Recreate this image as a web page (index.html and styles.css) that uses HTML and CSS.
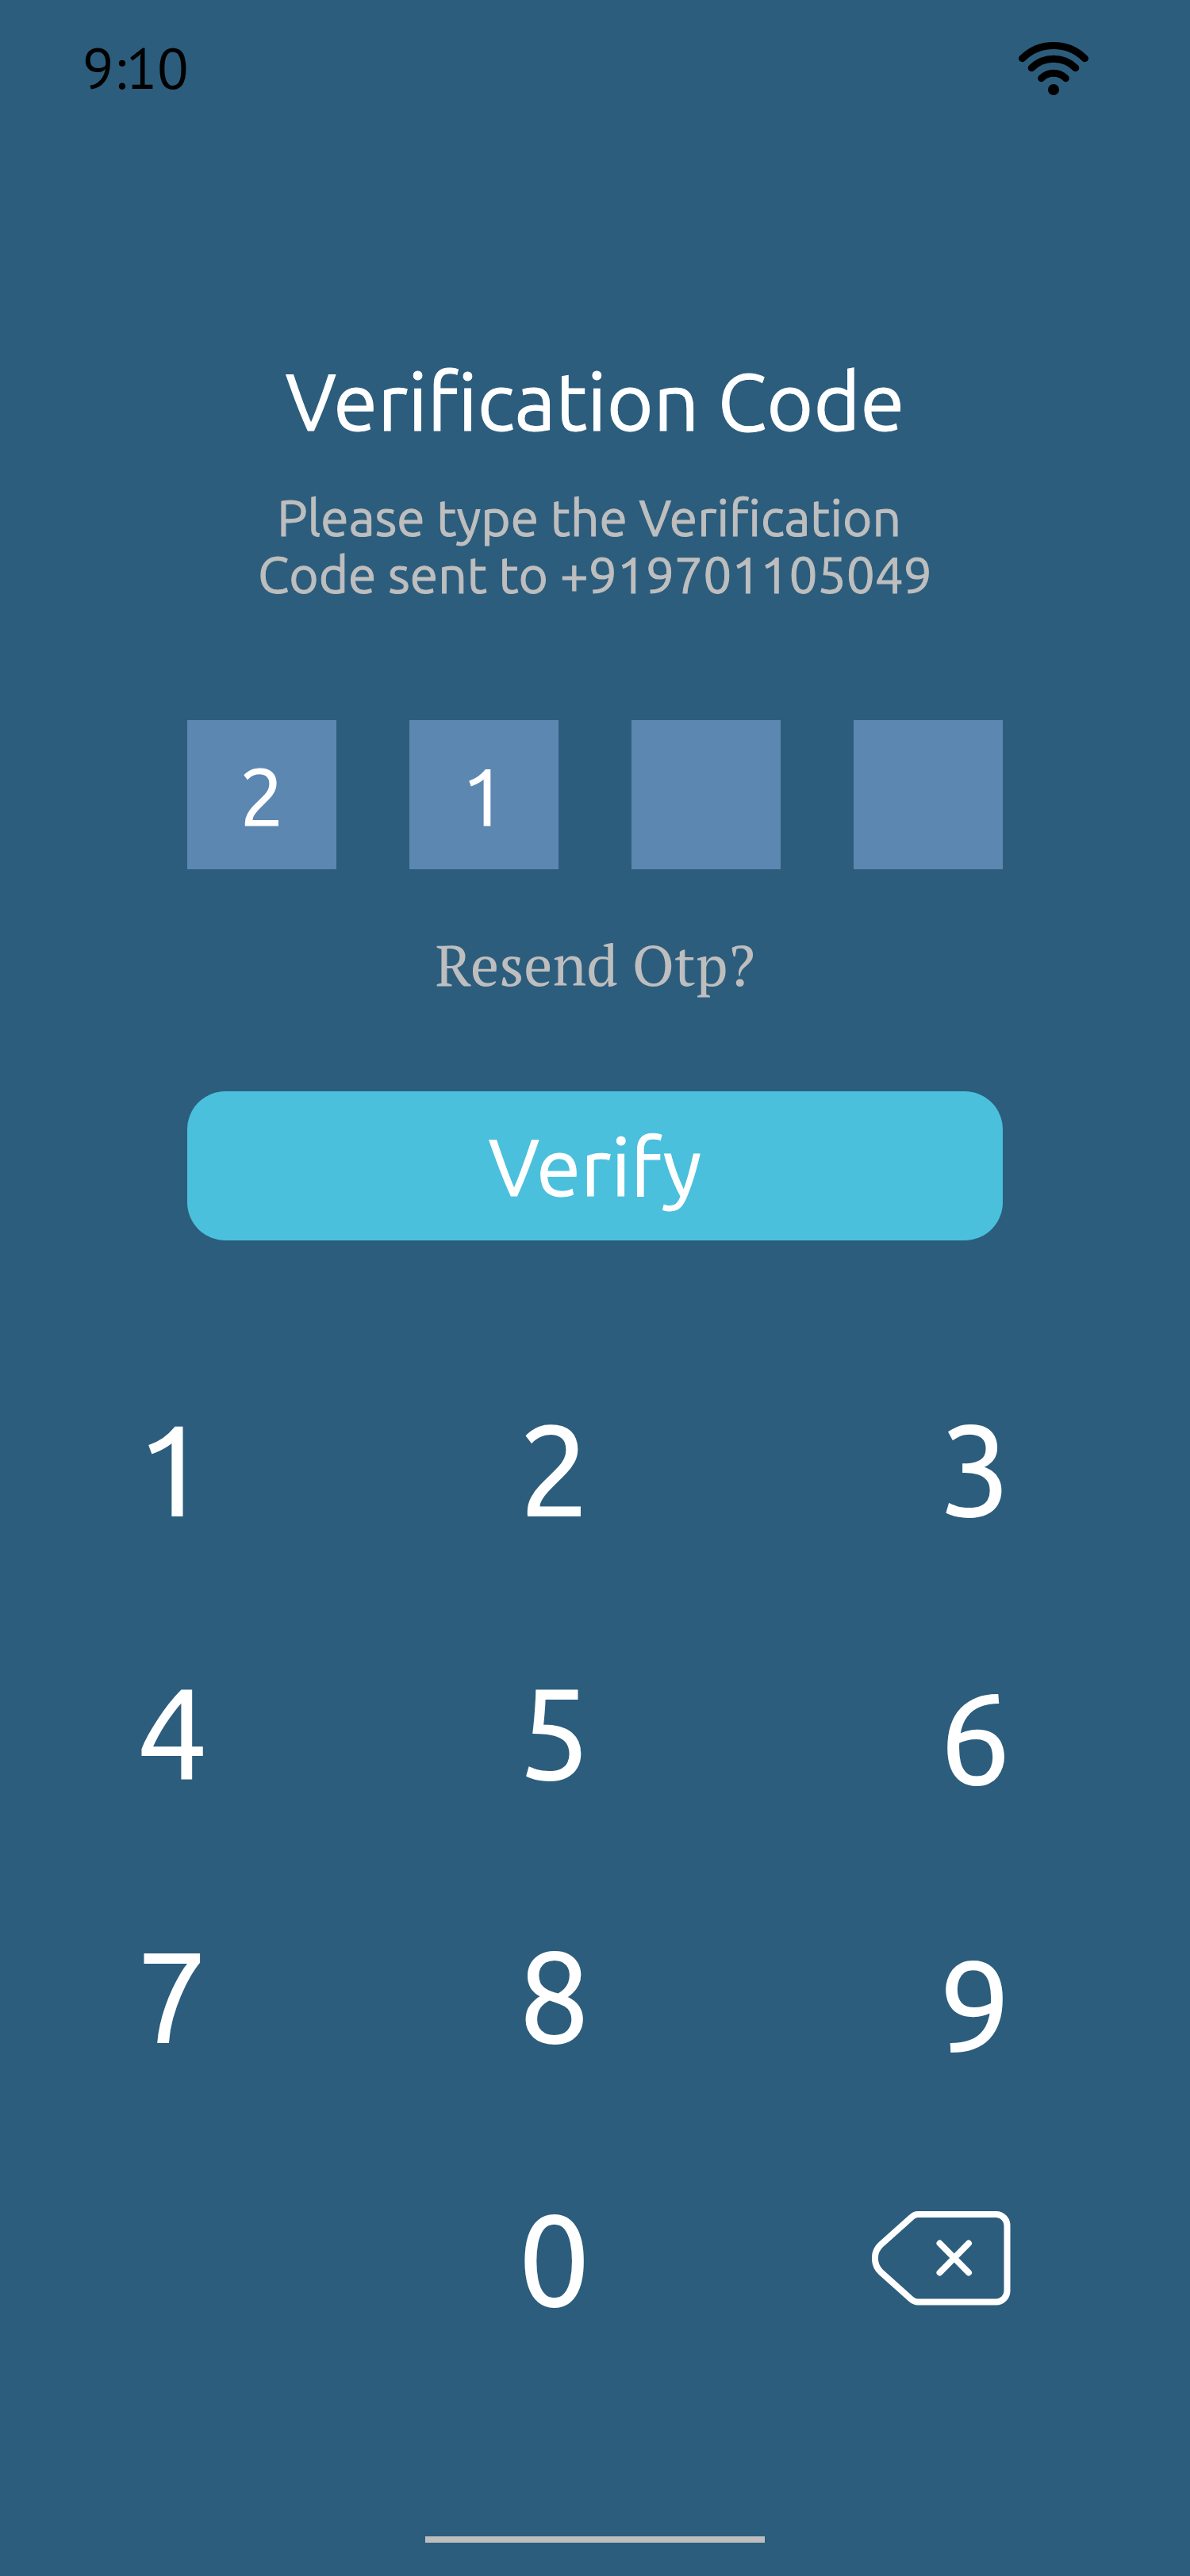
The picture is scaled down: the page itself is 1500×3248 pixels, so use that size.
FILE: index.html
```html
<!DOCTYPE html>
<html lang="en">
<head>
<meta charset="utf-8">
<meta name="viewport" content="width=device-width, initial-scale=1">
<title>Verification Code</title>
<link rel="stylesheet" href="styles.css">
</head>
<body>
<div class="screen">
  <header class="status-bar">
    <time class="clock">9:10</time>
    <svg class="wifi" viewBox="24 22 88 67" role="img" aria-label="Wi-Fi">
      <g fill="none" stroke="currentColor" stroke-width="9" stroke-linecap="round">
        <path d="M28.5 42.7A56.3 56.3 0 0 1 107.5 42.7"/>
        <path d="M40.2 54.7A39.6 39.6 0 0 1 95.8 54.7"/>
        <path d="M52.7 67.7A21.5 21.5 0 0 1 83.3 67.7"/>
      </g>
      <circle cx="68" cy="82" r="7" fill="currentColor"/>
    </svg>
  </header>

  <main class="content">
    <form class="verify-form">
      <h1 class="title">Verification Code</h1>
      <p class="hint">Please type the Verification&nbsp;<br>Code sent to +919701105049</p>
      <div class="code-boxes">
        <input class="code-box" type="text" inputmode="numeric" maxlength="1" value="2" aria-label="Digit 1">
        <input class="code-box" type="text" inputmode="numeric" maxlength="1" value="1" aria-label="Digit 2">
        <input class="code-box" type="text" inputmode="numeric" maxlength="1" aria-label="Digit 3">
        <input class="code-box" type="text" inputmode="numeric" maxlength="1" aria-label="Digit 4">
      </div>
      <a class="resend" href="#">Resend Otp?</a>
      <button class="verify" type="submit">Verify</button>
    </form>

    <div class="keypad">
      <div class="key-column">
        <button class="key" type="button">1</button>
        <button class="key" type="button">4</button>
        <button class="key" type="button">7</button>
      </div>
      <div class="key-column key-column-middle">
        <button class="key" type="button">2</button>
        <button class="key" type="button">5</button>
        <button class="key" type="button">8</button>
        <button class="key" type="button">0</button>
      </div>
      <div class="key-column key-column-end">
        <button class="key" type="button">3</button>
        <button class="key" type="button">6</button>
        <button class="key" type="button">9</button>
        <button class="key-delete" type="button" aria-label="Delete">
          <svg class="delete-icon" viewBox="30 28 175 119" fill="none" stroke="currentColor" stroke-width="8" stroke-linecap="round">
            <path d="M88 32H186.500A14 14 0 0 1 200.500 46V128.500A14 14 0 0 1 186.500 142.500H88Q83.500 142.500 79.500 139L41 104.500C31.500 95 31.500 79.500 41 70.500L79.500 36Q83.500 32 88 32Z"/>
            <path d="M115.500 68.500L152 105.500M152 68.500L115.500 105.500"/>
          </svg>
        </button>
      </div>
    </div>
  </main>

  <div class="home-indicator"></div>
</div>
</body>
</html>
```
FILE: styles.css
```css
* {
  box-sizing: border-box;
}

body {
  margin: 0;
  background: #2c5d7d;
  color: #fff;
  font-family: Ubuntu, "Noto Sans", sans-serif;
}

button,
input {
  margin: 0;
  padding: 0;
  border: 0;
  background: none;
  color: inherit;
  font: inherit;
}

button {
  cursor: pointer;
}

.screen {
  display: flex;
  flex-direction: column;
  min-height: 100vh;
  padding-bottom: 42px;
}

.status-bar {
  display: flex;
  align-items: center;
  justify-content: space-between;
  padding: 36px 128px 0 104px;
  color: #000;
}

.clock {
  font-family: "PT Sans", "Noto Sans CJK JP", sans-serif;
  font-size: 72px;
  line-height: 100px;
}

.wifi {
  width: 88px;
  height: 67px;
}

.content {
  display: flex;
  flex-direction: column;
}

.verify-form {
  display: flex;
  flex-direction: column;
  padding: 306px 236px 0;
  text-align: center;
}

.title,
.hint,
.code-box,
.verify {
  -webkit-text-stroke: 1px currentColor;
}

.title {
  margin: 0;
  font-size: 101px;
  font-weight: 400;
  line-height: 128px;
}

.hint {
  margin: 46px 0 0;
  color: #bebebe;
  font-size: 64px;
  line-height: 72px;
}

.code-boxes {
  display: grid;
  grid-template-columns: repeat(4, 1fr);
  gap: 92px;
  margin-top: 148px;
}

.code-box {
  width: 100%;
  aspect-ratio: 1;
  padding-top: 2px;
  border-radius: 0;
  background: #5b87b1;
  font-size: 101px;
  text-align: center;
}

.resend {
  align-self: center;
  margin-top: 76px;
  color: #bebebe;
  font-family: "PT Serif", "Liberation Serif", serif;
  font-size: 72px;
  line-height: 88px;
  text-decoration: none;
}

.verify {
  height: 188px;
  margin-top: 116px;
  border-radius: 48px;
  background: #4ac0dd;
  font-size: 101px;
}

.keypad {
  display: flex;
  justify-content: space-between;
  padding: 188px 226px 0 172px;
}

.key-column {
  display: flex;
  flex-direction: column;
  align-items: flex-end;
  gap: 132px;
}

.key-column-middle {
  padding-left: 36px;
}

.key-column-end {
  gap: 138px;
}

.key {
  font-size: 160px;
  line-height: 200px;
  -webkit-text-stroke: 2px currentColor;
}

.key-delete {
  display: flex;
  padding-top: 22px;
}

.delete-icon {
  width: 175px;
  height: 119px;
}

.home-indicator {
  width: 428px;
  height: 8px;
  margin: auto auto 0;
  background: #bebebe;
}
```
